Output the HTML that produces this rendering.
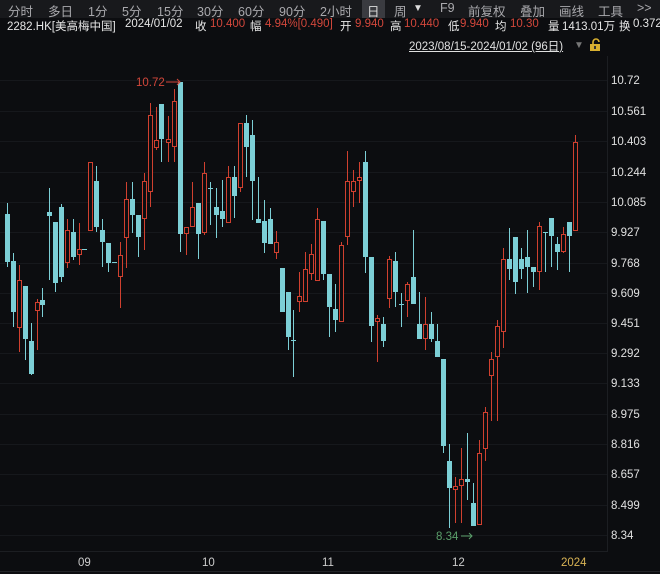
<!DOCTYPE html>
<html><head><meta charset="utf-8"><style>
body{margin:0;width:660px;height:574px;background:#0c0d10;overflow:hidden;font-family:"Liberation Sans","Noto Sans CJK SC",sans-serif;position:relative}
.t{position:absolute;white-space:nowrap}
#tb{position:absolute;left:0;top:0;width:660px;height:18px;background:#18191c}
#tb span{position:absolute;top:1px;font-size:12.5px;color:#a9a9ad}
#info span{position:absolute;top:18px;font-size:11.5px;color:#e6e6e6}
#info .r{color:#d2473b}
</style></head><body>
<div id="tb">
<div style="position:absolute;left:362px;top:0;width:23px;height:18px;background:#3a3b40"></div>
<span style="left:8px">分时</span><span style="left:48px">多日</span><span style="left:88px">1分</span><span style="left:122px">5分</span><span style="left:157px">15分</span><span style="left:197px">30分</span><span style="left:238px">60分</span><span style="left:279px">90分</span><span style="left:320px">2小时</span><span style="left:367px;color:#ddd">日</span><span style="left:394px">周</span><span style="left:413px;font-size:10px;top:3px;color:#ddd">▼</span><span style="left:440px">F9</span><span style="left:468px">前复权</span><span style="left:520px">叠加</span><span style="left:559px">画线</span><span style="left:598px">工具</span><span style="left:637px">&gt;&gt;</span>
</div>
<div id="info">
<span style="left:7px">2282.HK[美高梅中国]</span><span style="left:125px">2024/01/02</span><span style="left:195px">收</span><span class="r" style="left:210px">10.400</span><span style="left:250px">幅</span><span class="r" style="left:265px">4.94%[0.490]</span><span style="left:340px">开</span><span class="r" style="left:355px">9.940</span><span style="left:390px">高</span><span class="r" style="left:404px">10.440</span><span style="left:448px">低</span><span class="r" style="left:460px">9.940</span><span style="left:495px">均</span><span class="r" style="left:510px">10.30</span><span style="left:548px">量</span><span style="left:562px">1413.01万</span><span style="left:619px">换</span><span style="left:633px">0.372</span>
</div>
<div class="t" style="left:409px;top:38px;font-size:11.5px;color:#e0e0e0;text-decoration:underline">2023/08/15-2024/01/02 (96日)</div>
<div class="t" style="left:574px;top:40px;font-size:10px;color:#777">▼</div>
<svg class="t" style="left:589px;top:38px" width="14" height="14"><path d="M4 6V4a3 3 0 0 1 6 0" stroke="#d8b030" stroke-width="1.6" fill="none"/><rect x="1" y="6" width="10" height="7" fill="#d8b030"/><rect x="5" y="8" width="2" height="3" fill="#333"/></svg>
<svg id="c" class="t" style="left:0;top:0" width="660" height="574"></svg>
<script>
var s='';
var ys=[80,111,141,172,202,232,263,293,323,353,383,414,444,474,505,535];
var lb=['10.72','10.561','10.403','10.244','10.085','9.927','9.768','9.609','9.451','9.292','9.133','8.975','8.816','8.657','8.499','8.34'];
for(var i=0;i<ys.length;i++){s+='<line x1="0" x2="607" y1="'+ys[i]+'.5" y2="'+ys[i]+'.5" stroke="#16181c"/>';s+='<text x="611" y="'+(ys[i]+4)+'" fill="#e0e0e0" font-size="11.5" font-family="Liberation Sans">'+lb[i]+'</text>';}
s+='<line x1="607.5" x2="607.5" y1="56" y2="552" stroke="#1c1e22"/><line x1="0" x2="607" y1="551.5" y2="551.5" stroke="#1c1e22"/><line x1="0" x2="660" y1="571.5" y2="571.5" stroke="#222428"/>';
var xl=[[78,'09','#ccc'],[202,'10','#ccc'],[322,'11','#ccc'],[452,'12','#ccc'],[561,'2024','#d9b455']];
xl.forEach(function(a){s+='<text x="'+a[0]+'" y="566" fill="'+a[2]+'" font-size="11.5" font-family="Liberation Sans">'+a[1]+'</text>';});
var C='#7ccfd6',R='#d0402f';
var d=[
[7,'c',214,262,203,267],[13,'c',261,312,253,327],[19,'r',280,328,265,352],[25,'c',286,339,286,360],[31,'c',341,374,323,375],[37,'r',302,311,299,350],[42,'c',300,305,288,317],[49,'c',212,216,188,280],[55,'c',222,283,222,292],[61,'c',207,277,204,282],[67,'r',230,263,219,268],[73,'c',232,257,219,260],[79,'r',249,255,223,265],[84,'c',249,250,249,250],[90,'r',162,231,162,231],[96,'c',181,227,166,232],[102,'c',230,242,219,267],[108,'c',243,263,243,272],[114,'c',262,263,262,263],[120,'r',255,277,242,308],[126,'r',199,238,182,268],[132,'c',199,215,182,233],[138,'c',215,237,215,257],[144,'r',181,219,173,250],[150,'r',115,192,103,207],[156,'r',140,148,107,150],[161,'c',104,139,104,162],[168,'r',139,143,116,162],[174,'r',101,147,89,162],[180,'c',82,234,82,252],[186,'r',227,234,227,255],[192,'r',207,227,182,227],[198,'c',203,234,203,259],[204,'r',173,233,162,235],[210,'c',188,189,182,225],[216,'c',207,215,188,238],[222,'c',211,219,180,227],[228,'r',177,223,166,223],[234,'c',177,196,166,218],[240,'r',123,188,123,192],[246,'c',123,147,115,177],[252,'c',135,181,120,220],[258,'c',219,223,177,223],[264,'c',221,243,200,253],[270,'c',219,244,208,244],[276,'r',242,253,231,259],[282,'c',268,312,268,312],[288,'c',292,337,292,350],[293,'c',340,341,310,377],
[299,'r',296,302,272,312],[305,'r',269,302,252,302],[311,'r',254,274,244,280],[317,'r',219,281,208,281],[323,'c',221,274,221,280],[329,'c',274,307,274,337],[335,'c',309,320,284,332],[341,'r',245,322,242,322],[347,'r',181,237,151,245],[353,'r',181,192,170,207],[359,'r',177,181,162,203],[365,'c',162,257,151,273],[371,'c',257,326,257,342],[377,'r',318,322,315,362],[383,'c',324,341,317,347],[389,'r',259,299,256,308],[395,'c',261,292,252,307],[401,'c',304,305,293,327],[407,'r',284,301,282,317],[413,'c',277,304,230,304],[419,'c',324,339,292,339],[425,'r',324,339,297,350],[431,'c',324,339,312,342],[437,'c',341,357,324,357],[443,'c',359,446,359,453],[449,'c',461,488,444,528],[455,'r',486,490,477,523],[461,'r',479,486,448,523],[467,'c',479,482,433,500],[473,'c',503,526,483,526],[479,'r',453,525,440,525],[485,'r',412,449,407,461],[491,'r',359,376,352,421],[497,'r',326,357,320,421],[503,'r',259,332,248,348],[509,'c',259,269,228,280],[515,'c',237,282,237,294],[521,'c',259,269,248,279],[527,'c',257,267,230,293],[533,'c',267,272,267,287],[539,'r',226,272,222,290],[545,'c',232,233,232,272],[551,'c',218,236,218,267],[557,'c',244,252,237,270],[563,'r',234,252,227,253],[569,'c',222,236,222,272],[575,'r',142,231,135,231]];
d.forEach(function(a){var x=a[0],col=a[1]=='c'?C:R;
s+='<rect x="'+x+'" y="'+a[4]+'" width="1" height="'+Math.max(a[5]-a[4],1)+'" fill="'+col+'"/>';
var h=Math.max(a[3]-a[2],1);
if(a[1]=='c')s+='<rect x="'+(x-2)+'" y="'+a[2]+'" width="5" height="'+h+'" fill="'+col+'"/>';
else{h=Math.max(h,3);s+='<rect x="'+(x-2)+'" y="'+a[2]+'" width="5" height="'+h+'" fill="'+col+'"/><rect x="'+(x-1)+'" y="'+(a[2]+1)+'" width="3" height="'+(h-2)+'" fill="#0c0d10"/>';}});
s+='<text x="136" y="86" fill="#d2473b" font-size="11.5" font-family="Liberation Sans">10.72</text><path d="M166 82H180M177 79L180 82L177 85" stroke="#d2473b" fill="none"/>';
s+='<text x="436" y="540" fill="#5a9e6a" font-size="11.5" font-family="Liberation Sans">8.34</text><path d="M461 536H472M469 533L472 536L469 539" stroke="#5a9e6a" fill="none"/>';
document.getElementById('c').innerHTML=s;
</script>
</body></html>
